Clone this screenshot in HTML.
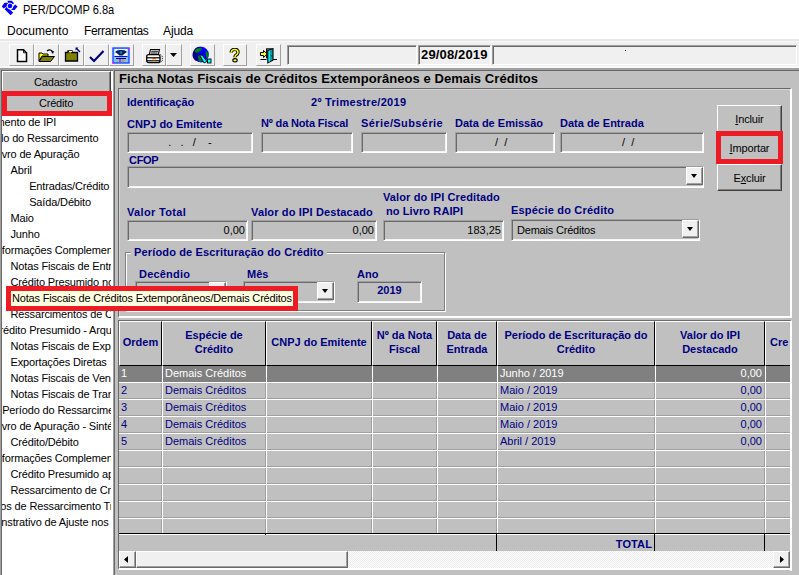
<!DOCTYPE html>
<html><head><meta charset="utf-8"><title>PER/DCOMP</title>
<style>
*{box-sizing:border-box;margin:0;padding:0}
html,body{width:799px;height:575px;overflow:hidden}
body{position:relative;background:#a0a0a0;font-family:"Liberation Sans",sans-serif;font-size:11px;color:#000}
.a{position:absolute}
.t{position:absolute;white-space:nowrap;line-height:12px;font-size:11px}
.b{font-weight:bold}
.nv{color:#000080}
.fld{position:absolute;background:#c0c0c0;border-top:1px solid #a0a0a0;border-left:1px solid #a0a0a0;border-bottom:1px solid #fff;border-right:1px solid #fff;box-shadow:inset 1px 1px 0 #696969,inset -1px -1px 0 #f4f4f4}
.btn{position:absolute;background:#c0c0c0;border-top:1px solid #fff;border-left:1px solid #fff;border-bottom:1px solid #404040;border-right:1px solid #404040;box-shadow:inset -1px -1px 0 #808080}
.tb{position:absolute;top:44px;height:22px;background:#f0f0f0;border-top:1px solid #fff;border-left:1px solid #fff;border-bottom:1px solid #a0a0a0;border-right:1px solid #a0a0a0}
.tb svg{position:absolute}
.dd{position:absolute;top:0;right:0;width:17px;height:18px;background:#f0f0f0;border-top:1px solid #fff;border-left:1px solid #fff;border-bottom:1px solid #696969;border-right:1px solid #696969;box-shadow:inset -1px -1px 0 #a0a0a0}
.dd:after{content:"";position:absolute;left:4px;top:6px;border-left:3.5px solid transparent;border-right:3.5px solid transparent;border-top:4px solid #000}
.red{position:absolute;border:5px solid #ed1c24}
.li{position:absolute;white-space:nowrap;line-height:12px;height:12px;font-size:11px;letter-spacing:-0.15px}
.hc{position:absolute;top:321px;height:45px;background:#c0c0c0;border-top:1px solid #fff;border-left:1px solid #fff;border-right:1px solid #000;border-bottom:1px solid #000;color:#000080;font-weight:bold;text-align:center;line-height:14px;white-space:nowrap;overflow:hidden}
.rc{position:absolute;height:16px;background:#c0c0c0;border-right:1px solid #a0a0a0;border-bottom:1px solid #a0a0a0}
.sel{background:#808080;border-color:#808080}
.rt{position:absolute;white-space:nowrap;line-height:12px;font-size:11px;color:#000080}
.selt{color:#fff}
</style></head>
<body>
<div class="a" style="left:0;top:0;width:799px;height:39px;background:#fff"></div>
<svg class="a" style="left:0;top:0" width="20" height="18" viewBox="0 0 20 18"><g fill="#0000ff">
<path d="M7.3 0.8 H11.8 L14 3.2 L12.6 4.8 L10.4 3.6 H8.8 Z"/>
<path d="M4.6 2.8 H9 L7.6 4.4 L7 6.2 L3.6 8.6 L1.8 6.6 Z"/>
<path d="M15.2 4.4 L17.6 6.6 L14.6 9.9 H11 L12.6 8.2 L13.2 6.6 Z"/>
<path d="M7 6.6 L8.6 8.6 L13.2 12.6 L10.6 15.2 L4.6 9.3 Z"/></g>
<circle cx="10" cy="6" r="2.9" fill="none" stroke="#fff" stroke-width="0.9"/>
<circle cx="10" cy="6" r="2.3" fill="#0000ff"/>
</svg>
<div class="t" style="left:23px;top:3px;font-size:12px;line-height:14px;transform:scaleX(0.92);transform-origin:0 0">PER/DCOMP 6.8a</div>
<div class="t" style="left:7px;top:24px;font-size:12px;line-height:14px">Documento</div>
<div class="t" style="left:84px;top:24px;font-size:12px;line-height:14px;letter-spacing:-0.32px">Ferramentas</div>
<div class="t" style="left:163px;top:24px;font-size:12px;line-height:14px;letter-spacing:-0.1px">Ajuda</div>
<div class="a" style="left:0;top:39px;width:799px;height:29px;background:#f0f0f0"></div>
<div class="a" style="left:0;top:39px;width:799px;height:2px;background:#e8e8e8"></div>
<div class="a" style="left:0;top:41px;width:799px;height:1px;background:#f8f8f8"></div>
<div class="a" style="left:0;top:66px;width:799px;height:2px;background:#fafafa"></div>
<div class="tb" style="left:9px;width:25px"><svg style="left:5.5px;top:4px" width="12" height="14" viewBox="0 0 12 14"><path d="M1.5 0.8 H7.5 L10.5 3.8 V12.6 H1.5 Z" fill="#fff" stroke="#000" stroke-width="1.5" stroke-linejoin="miter"/><path d="M7.5 0.8 V3.8 H10.5" fill="none" stroke="#000" stroke-width="0.9"/></svg></div>
<div class="tb" style="left:34px;width:25px"><svg style="left:3px;top:4px" width="18" height="14" viewBox="0 0 18 14"><path d="M1 4 H4 L5 5 H10 V7 H4 L1 12 Z" fill="#ffff00" stroke="#000" stroke-width="1"/><path d="M1 12.5 L4.5 7.5 H16.5 L12.5 12.5 Z" fill="#808000" stroke="#000" stroke-width="1"/><path d="M9 2 Q12 -0.5 14.5 2.5" fill="none" stroke="#000" stroke-width="1.2"/><path d="M13 2.5 L16 2 L15 5 Z" fill="#000"/></svg></div>
<div class="tb" style="left:59px;width:25px"><svg style="left:4px;top:2px" width="17" height="15" viewBox="0 0 17 15"><path d="M1.5 5.5 H4 V4 H8 V5.5 H13.5 V14 H1.5 Z" fill="#808000" stroke="#000" stroke-width="1.3"/><path d="M5 4.5 H8" stroke="#fff" stroke-width="1"/><path d="M16 5 L12.5 1.5" stroke="#000080" stroke-width="1.4"/><path d="M11.5 0.5 H14.5 L11.5 3.5 Z" fill="#000080"/></svg></div>
<div class="tb" style="left:84px;width:25px"><svg style="left:4px;top:5px" width="16" height="13" viewBox="0 0 16 13"><path d="M1 7 L5 11 L14.5 1" fill="none" stroke="#000080" stroke-width="2.2"/></svg></div>
<div class="tb" style="left:109px;width:25px"><svg style="left:2px;top:2px" width="18" height="17" viewBox="0 0 18 17"><rect x="1" y="1" width="16" height="15" fill="#80c0ff"/><rect x="2.5" y="2" width="13" height="7" fill="#f0f0ff"/><path d="M3 5 Q5 2.5 9 3 Q13 2.5 15 5 Q12 6.5 10.5 8.5 H7.5 Q6 6.5 3 5 Z" fill="#002060"/><circle cx="9" cy="5.5" r="1.3" fill="#2080a0"/><rect x="2.5" y="9" width="13" height="1" fill="#0000ff"/><rect x="4" y="11" width="10" height="1" fill="#000080"/><rect x="4.5" y="12" width="9" height="3" fill="#b0b090"/><rect x="7" y="12" width="2" height="3" fill="#6060ff"/><rect x="10.5" y="12" width="1" height="3" fill="#8090a0"/><rect x="1" y="1" width="16" height="15" fill="none" stroke="#1040ff" stroke-width="1.3"/><rect x="0.5" y="15" width="1.5" height="1.5" fill="#ff00ff"/><rect x="16" y="1" width="1.5" height="1.5" fill="#ff00ff"/></svg></div>
<div class="tb" style="left:142px;width:24px"><svg style="left:3px;top:4px" width="18" height="15" viewBox="0 0 18 15"><path d="M4.5 0.5 H13.5 L12.3 5.5 H3.3 Z" fill="#fff" stroke="#000" stroke-width="1.1"/><path d="M5.3 2.2 H12 M4.8 4 H11.6" stroke="#000" stroke-width="1"/><rect x="0.7" y="5.7" width="13.3" height="8" rx="2" fill="#fff" stroke="#000" stroke-width="1.3"/><rect x="0.7" y="8.2" width="13.3" height="1.2" fill="#000"/><rect x="0.7" y="11.2" width="13.3" height="1.2" fill="#000"/><rect x="6.5" y="9.4" width="3.5" height="1" fill="#ff0000"/><rect x="6.5" y="10.4" width="3.5" height="0.8" fill="#ffff00"/><path d="M14.5 5.5 L16.3 7.5 V11.5 L14.5 13.5" stroke="#000" stroke-width="1" stroke-dasharray="1 1" fill="none"/></svg></div>
<div class="tb" style="left:166px;width:16px"><svg style="left:3px;top:8px" width="7" height="4" viewBox="0 0 7 4"><path d="M0 0 H7 L3.5 4 Z" fill="#000"/></svg></div>
<div class="tb" style="left:190px;width:25px"><svg style="left:1px;top:1px" width="21" height="19" viewBox="0 0 21 19"><circle cx="9" cy="8.6" r="7.8" fill="#0000ff"/><path d="M9 0.8 A7.8 7.8 0 0 0 4 15 L6 14 L5 9 L7 6 L6 2 Z" fill="#000080"/><path d="M3 4 L6 2 L10 2 L9 4 L7 6 L5 7 L3 6 Z" fill="#008000"/><path d="M4 3.5 L6 2.5 L7 4 L5 5 Z" fill="#008080"/><path d="M6 10 L8 9 L10 12 L9.5 16 L7 15.5 Z" fill="#008000"/><path d="M14 5 L16.5 7 L16.5 11 L14.5 12 L13.5 8 Z" fill="#008000"/><path d="M8.5 6 L10 7 H12 L11 8 Z" fill="#000060"/><path d="M7.5 8.5 L10.5 9.5 L15 15.5 L12 17 Z" fill="#00ffff" stroke="#000" stroke-width="0.9" stroke-linejoin="round"/><rect x="15.5" y="13" width="3.5" height="4" fill="#00ffff" stroke="#000" stroke-width="0.9"/></svg></div>
<div class="tb" style="left:223px;width:24px"><svg style="left:5px;top:2.5px" width="12" height="15" viewBox="0 0 12 15"><path d="M2.3 4.6 Q2.3 1.4 5.6 1.4 Q9 1.4 9 4.2 Q9 5.9 7.2 6.9 Q6 7.6 6 9.3" fill="none" stroke="#000" stroke-width="3.4"/><path d="M2.3 4.6 Q2.3 1.4 5.6 1.4 Q9 1.4 9 4.2 Q9 5.9 7.2 6.9 Q6 7.6 6 9.3" fill="none" stroke="#ffff00" stroke-width="1.5"/><ellipse cx="6" cy="12.3" rx="2.2" ry="1.7" fill="#ffff00" stroke="#000" stroke-width="1.1"/></svg></div>
<div class="tb" style="left:256px;width:25px"><svg style="left:3px;top:3px" width="18" height="16" viewBox="0 0 18 16"><rect x="6.5" y="0.8" width="5" height="9" fill="#808080" stroke="#000" stroke-width="0.9"/><path d="M0.5 4.5 H3.5 V2.5 L7.2 6 L3.5 9.5 V7.5 H0.5 Z" fill="#ffff00" stroke="#000" stroke-width="1"/><path d="M0.5 11.5 H6.5 M13 11.5 H17" stroke="#000" stroke-width="1.1"/><path d="M7.8 2.5 L13 0.6 V12.2 L7.8 14.8 Z" fill="#00a0a8" stroke="#000" stroke-width="1.1"/><path d="M8.6 3 L9.8 2.5 V13.6 L8.6 14.2 Z" fill="#00ffff"/><rect x="10.6" y="7.4" width="0.9" height="1" fill="#000"/></svg></div>
<div class="a" style="left:287px;top:45px;width:130px;height:20px;background:#f0f0f0;border-top:1px solid #a0a0a0;border-left:1px solid #a0a0a0;border-bottom:1px solid #fff;border-right:1px solid #fff;box-shadow:inset 1px 1px 0 #696969"></div>
<div class="a" style="left:418px;top:45px;width:73px;height:20px;background:#f0f0f0;border-top:1px solid #a0a0a0;border-left:1px solid #a0a0a0;border-bottom:1px solid #fff;border-right:1px solid #fff;box-shadow:inset 1px 1px 0 #696969"></div>
<div class="t b" style="left:421px;top:47px;font-size:13px;line-height:15px;letter-spacing:0.15px">29/08/2019</div>
<div class="a" style="left:492px;top:45px;width:305px;height:20px;background:#f0f0f0;border-top:1px solid #a0a0a0;border-left:1px solid #a0a0a0;border-bottom:1px solid #fff;border-right:1px solid #fff;box-shadow:inset 1px 1px 0 #696969"></div>
<div class="a" style="left:625px;top:50px;width:1px;height:1px;background:#000"></div>
<div class="a" style="left:1px;top:70px;width:112px;height:505px;background:#fff;border-top:1px solid #696969;border-left:1px solid #696969"></div>
<div class="btn" style="left:2px;top:71px;width:109px;height:22px"></div>
<div class="t" style="left:34px;top:76px;letter-spacing:-0.17px">Cadastro</div>
<div class="btn" style="left:7px;top:96px;width:100px;height:15px;border:0;box-shadow:none"></div>
<div class="t" style="left:39px;top:97px;letter-spacing:-0.2px">Crédito</div>
<div class="red" style="left:2px;top:91px;width:110px;height:25px"></div>
<div class="a" style="left:2px;top:116px;width:109px;height:459px;overflow:hidden">
<div class="li" style="left:-6.4px;top:0px">mento de IPI</div>
<div class="li" style="left:-7.0px;top:16px">ulo do Ressarcimento</div>
<div class="li" style="left:-8.6px;top:32px">Livro de Apuração</div>
<div class="li" style="left:8.5px;top:48px">Abril</div>
<div class="li" style="left:27.2px;top:64px">Entradas/Crédito</div>
<div class="li" style="left:27.2px;top:80px">Saída/Débito</div>
<div class="li" style="left:8.5px;top:96px">Maio</div>
<div class="li" style="left:8.5px;top:112px">Junho</div>
<div class="li" style="left:-9.0px;top:128px">Informações Complementares</div>
<div class="li" style="left:8.5px;top:144px">Notas Fiscais de Entrada</div>
<div class="li" style="left:8.5px;top:160px">Crédito Presumido no</div>
<div class="li" style="left:8.5px;top:176px">Notas Fiscais de Créditos Extemporâneos/Demais Créditos</div>
<div class="li" style="left:8.5px;top:192px">Ressarcimentos de Créditos</div>
<div class="li" style="left:-10.2px;top:208px">Crédito Presumido - Arquivo</div>
<div class="li" style="left:8.5px;top:224px">Notas Fiscais de Exportação</div>
<div class="li" style="left:8.5px;top:240px">Exportações Diretas</div>
<div class="li" style="left:8.5px;top:256px">Notas Fiscais de Venda</div>
<div class="li" style="left:8.5px;top:272px">Notas Fiscais de Transferência</div>
<div class="li" style="left:0.2px;top:288px">Período do Ressarcimento</div>
<div class="li" style="left:-8.6px;top:304px">Livro de Apuração - Sintético</div>
<div class="li" style="left:8.5px;top:320px">Crédito/Débito</div>
<div class="li" style="left:-9.0px;top:336px">Informações Complementares</div>
<div class="li" style="left:8.5px;top:352px">Crédito Presumido apurado</div>
<div class="li" style="left:8.5px;top:368px">Ressarcimento de Créditos</div>
<div class="li" style="left:-7.6px;top:384px">dos de Ressarcimento Trimestrais</div>
<div class="li" style="left:-6.6px;top:400px">onstrativo de Ajuste nos</div>
</div>
<div class="a" style="left:114px;top:70px;width:685px;height:505px;background:#c0c0c0;border-top:1px solid #696969;border-left:1px solid #696969"></div>
<div class="t b" style="left:119px;top:71px;font-size:13px;line-height:15px;letter-spacing:0.07px">Ficha Notas Fiscais de Créditos Extemporâneos e Demais Créditos</div>
<div class="a" style="left:118px;top:88px;width:674px;height:230px;background:#c0c0c0;border-top:1px solid #696969;border-left:1px solid #696969;border-bottom:2px solid #fff;border-right:2px solid #fff;box-shadow:inset 1px 1px 0 #d4d4d4"></div>
<div class="t b nv" style="left:127px;top:96px;">Identificação</div>
<div class="t b nv" style="left:311px;top:96px;letter-spacing:0.3px">2º Trimestre/2019</div>
<div class="t b nv" style="left:127px;top:118px;">CNPJ do Emitente</div>
<div class="t b nv" style="left:261px;top:117px;letter-spacing:-0.15px">Nº da Nota Fiscal</div>
<div class="t b nv" style="left:361px;top:117px;letter-spacing:0.4px">Série/Subsérie</div>
<div class="t b nv" style="left:455px;top:117px;">Data de Emissão</div>
<div class="t b nv" style="left:560px;top:117px;">Data de Entrada</div>
<div class="fld" style="left:127px;top:132px;width:126px;height:21px"><div class="t" style="left:0;right:0;text-align:center;top:3px;color:#000">.&nbsp;&nbsp;&nbsp;.&nbsp;&nbsp;&nbsp;/&nbsp;&nbsp;&nbsp;&nbsp;-</div></div>
<div class="fld" style="left:261px;top:132px;width:92px;height:21px"></div>
<div class="fld" style="left:361px;top:132px;width:86px;height:21px"></div>
<div class="fld" style="left:455px;top:132px;width:100px;height:21px"><div class="t" style="left:39px;top:3px;color:#000">/&nbsp;&nbsp;/</div></div>
<div class="fld" style="left:560px;top:132px;width:144px;height:21px"><div class="t" style="left:61px;top:3px;color:#000">/&nbsp;&nbsp;/</div></div>
<div class="t b nv" style="left:129px;top:154px;letter-spacing:-0.3px">CFOP</div>
<div class="fld" style="left:127px;top:166px;width:577px;height:22px"><div class="dd"></div></div>
<div class="t b nv" style="left:383px;top:191px;letter-spacing:0.12px">Valor do IPI Creditado</div>
<div class="t b nv" style="left:386px;top:205px;letter-spacing:0.1px">no Livro RAIPI</div>
<div class="t b nv" style="left:127px;top:206px;letter-spacing:0.33px">Valor Total</div>
<div class="t b nv" style="left:251px;top:206px;letter-spacing:0.15px">Valor do IPI Destacado</div>
<div class="t b nv" style="left:511px;top:204px;letter-spacing:0.2px">Espécie do Crédito</div>
<div class="fld" style="left:127px;top:220px;width:121px;height:21px"><div class="t" style="right:2px;top:3px;color:#000">0,00</div></div>
<div class="fld" style="left:251px;top:220px;width:126px;height:21px"><div class="t" style="right:2px;top:3px;color:#000">0,00</div></div>
<div class="fld" style="left:383px;top:220px;width:121px;height:21px"><div class="t" style="right:2px;top:3px;color:#000">183,25</div></div>
<div class="fld" style="left:511px;top:219px;width:189px;height:22px"><div class="t" style="left:5px;top:4px;letter-spacing:-0.2px">Demais Créditos</div><div class="dd"></div></div>
<div class="btn" style="left:717px;top:105px;width:65px;height:28px"><div class="t" style="left:0;right:0;text-align:center;top:7px;letter-spacing:-0.15px"><u>I</u>ncluir</div></div>
<div class="btn" style="left:717px;top:134px;width:65px;height:27px"><div class="t" style="left:0;right:0;text-align:center;top:7px;letter-spacing:-0.15px"><u>I</u>mportar</div></div>
<div class="btn" style="left:717px;top:164px;width:65px;height:27px"><div class="t" style="left:0;right:0;text-align:center;top:7px;letter-spacing:-0.15px">E<u>x</u>cluir</div></div>
<div class="red" style="left:716px;top:131px;width:67px;height:33px;border-width:5px"></div>
<div class="a" style="left:125px;top:252px;width:320px;height:59px;border-top:1px solid #808080;border-left:1px solid #808080;border-right:1px solid #fff;border-bottom:1px solid #fff;box-shadow:inset 1px 1px 0 #fff,1px 1px 0 #808080 inset"></div>
<div class="a" style="left:125px;top:252px;width:320px;height:59px;border-top:1px solid #808080;border-left:1px solid #808080;border-right:1px solid #808080;border-bottom:1px solid #808080;box-shadow:inset 1px 1px 0 #fff,1px 1px 0 #fff"></div>
<div class="t b nv" style="left:131px;top:246px;background:#c0c0c0;padding:0 3px;letter-spacing:0.15px">Período de Escrituração do Crédito</div>
<div class="t b nv" style="left:139px;top:268px;letter-spacing:0.2px">Decêndio</div>
<div class="t b nv" style="left:247px;top:268px;">Mês</div>
<div class="t b nv" style="left:357px;top:268px;">Ano</div>
<div class="fld" style="left:135px;top:281px;width:92px;height:22px"><div class="dd"></div></div>
<div class="fld" style="left:243px;top:281px;width:92px;height:22px"><div class="dd"></div></div>
<div class="fld" style="left:357px;top:281px;width:65px;height:22px"><div class="t b" style="left:0;right:0;text-align:center;top:2px;color:#000080">2019</div></div>
<div class="a" style="left:6px;top:286px;width:292px;height:25px;border:5px solid #ed1c24;background:#ffffe1"></div>
<div class="t" style="left:12px;top:292px;letter-spacing:-0.18px">Notas Fiscais de Créditos Extemporâneos/Demais Créditos</div>
<div class="a" style="left:118px;top:320px;width:674px;height:250px;background:#c0c0c0;border-top:1px solid #696969;border-left:1px solid #696969;border-bottom:2px solid #fff;border-right:2px solid #fff"></div>
<div class="a" style="left:119px;top:366px;width:671px;height:167px;background:#fff;overflow:hidden">
<div class="rc sel" style="left:0px;top:0px;width:43px"></div>
<div class="rc sel" style="left:44px;top:0px;width:103px"></div>
<div class="rc sel" style="left:148px;top:0px;width:105px"></div>
<div class="rc sel" style="left:254px;top:0px;width:64px"></div>
<div class="rc sel" style="left:319px;top:0px;width:59px"></div>
<div class="rc sel" style="left:379px;top:0px;width:157px"></div>
<div class="rc sel" style="left:537px;top:0px;width:109px"></div>
<div class="rc sel" style="left:647px;top:0px;width:25px"></div>
<div class="rc" style="left:0px;top:17px;width:43px"></div>
<div class="rc" style="left:44px;top:17px;width:103px"></div>
<div class="rc" style="left:148px;top:17px;width:105px"></div>
<div class="rc" style="left:254px;top:17px;width:64px"></div>
<div class="rc" style="left:319px;top:17px;width:59px"></div>
<div class="rc" style="left:379px;top:17px;width:157px"></div>
<div class="rc" style="left:537px;top:17px;width:109px"></div>
<div class="rc" style="left:647px;top:17px;width:25px"></div>
<div class="rc" style="left:0px;top:34px;width:43px"></div>
<div class="rc" style="left:44px;top:34px;width:103px"></div>
<div class="rc" style="left:148px;top:34px;width:105px"></div>
<div class="rc" style="left:254px;top:34px;width:64px"></div>
<div class="rc" style="left:319px;top:34px;width:59px"></div>
<div class="rc" style="left:379px;top:34px;width:157px"></div>
<div class="rc" style="left:537px;top:34px;width:109px"></div>
<div class="rc" style="left:647px;top:34px;width:25px"></div>
<div class="rc" style="left:0px;top:51px;width:43px"></div>
<div class="rc" style="left:44px;top:51px;width:103px"></div>
<div class="rc" style="left:148px;top:51px;width:105px"></div>
<div class="rc" style="left:254px;top:51px;width:64px"></div>
<div class="rc" style="left:319px;top:51px;width:59px"></div>
<div class="rc" style="left:379px;top:51px;width:157px"></div>
<div class="rc" style="left:537px;top:51px;width:109px"></div>
<div class="rc" style="left:647px;top:51px;width:25px"></div>
<div class="rc" style="left:0px;top:68px;width:43px"></div>
<div class="rc" style="left:44px;top:68px;width:103px"></div>
<div class="rc" style="left:148px;top:68px;width:105px"></div>
<div class="rc" style="left:254px;top:68px;width:64px"></div>
<div class="rc" style="left:319px;top:68px;width:59px"></div>
<div class="rc" style="left:379px;top:68px;width:157px"></div>
<div class="rc" style="left:537px;top:68px;width:109px"></div>
<div class="rc" style="left:647px;top:68px;width:25px"></div>
<div class="rc" style="left:0px;top:85px;width:43px"></div>
<div class="rc" style="left:44px;top:85px;width:103px"></div>
<div class="rc" style="left:148px;top:85px;width:105px"></div>
<div class="rc" style="left:254px;top:85px;width:64px"></div>
<div class="rc" style="left:319px;top:85px;width:59px"></div>
<div class="rc" style="left:379px;top:85px;width:157px"></div>
<div class="rc" style="left:537px;top:85px;width:109px"></div>
<div class="rc" style="left:647px;top:85px;width:25px"></div>
<div class="rc" style="left:0px;top:102px;width:43px"></div>
<div class="rc" style="left:44px;top:102px;width:103px"></div>
<div class="rc" style="left:148px;top:102px;width:105px"></div>
<div class="rc" style="left:254px;top:102px;width:64px"></div>
<div class="rc" style="left:319px;top:102px;width:59px"></div>
<div class="rc" style="left:379px;top:102px;width:157px"></div>
<div class="rc" style="left:537px;top:102px;width:109px"></div>
<div class="rc" style="left:647px;top:102px;width:25px"></div>
<div class="rc" style="left:0px;top:119px;width:43px"></div>
<div class="rc" style="left:44px;top:119px;width:103px"></div>
<div class="rc" style="left:148px;top:119px;width:105px"></div>
<div class="rc" style="left:254px;top:119px;width:64px"></div>
<div class="rc" style="left:319px;top:119px;width:59px"></div>
<div class="rc" style="left:379px;top:119px;width:157px"></div>
<div class="rc" style="left:537px;top:119px;width:109px"></div>
<div class="rc" style="left:647px;top:119px;width:25px"></div>
<div class="rc" style="left:0px;top:136px;width:43px"></div>
<div class="rc" style="left:44px;top:136px;width:103px"></div>
<div class="rc" style="left:148px;top:136px;width:105px"></div>
<div class="rc" style="left:254px;top:136px;width:64px"></div>
<div class="rc" style="left:319px;top:136px;width:59px"></div>
<div class="rc" style="left:379px;top:136px;width:157px"></div>
<div class="rc" style="left:537px;top:136px;width:109px"></div>
<div class="rc" style="left:647px;top:136px;width:25px"></div>
<div class="rc" style="left:0px;top:153px;width:43px"></div>
<div class="rc" style="left:44px;top:153px;width:103px"></div>
<div class="rc" style="left:148px;top:153px;width:105px"></div>
<div class="rc" style="left:254px;top:153px;width:64px"></div>
<div class="rc" style="left:319px;top:153px;width:59px"></div>
<div class="rc" style="left:379px;top:153px;width:157px"></div>
<div class="rc" style="left:537px;top:153px;width:109px"></div>
<div class="rc" style="left:647px;top:153px;width:25px"></div>
<div class="rt selt" style="left:2px;top:1px">1</div>
<div class="rt selt" style="left:46px;top:1px">Demais Créditos</div>
<div class="rt selt" style="left:381px;top:1px">Junho / 2019</div>
<div class="rt selt" style="left:583px;width:60px;text-align:right;top:1px">0,00</div>
<div class="rt" style="left:2px;top:18px">2</div>
<div class="rt" style="left:46px;top:18px">Demais Créditos</div>
<div class="rt" style="left:381px;top:18px">Maio / 2019</div>
<div class="rt" style="left:583px;width:60px;text-align:right;top:18px">0,00</div>
<div class="rt" style="left:2px;top:35px">3</div>
<div class="rt" style="left:46px;top:35px">Demais Créditos</div>
<div class="rt" style="left:381px;top:35px">Maio / 2019</div>
<div class="rt" style="left:583px;width:60px;text-align:right;top:35px">0,00</div>
<div class="rt" style="left:2px;top:52px">4</div>
<div class="rt" style="left:46px;top:52px">Demais Créditos</div>
<div class="rt" style="left:381px;top:52px">Maio / 2019</div>
<div class="rt" style="left:583px;width:60px;text-align:right;top:52px">0,00</div>
<div class="rt" style="left:2px;top:69px">5</div>
<div class="rt" style="left:46px;top:69px">Demais Créditos</div>
<div class="rt" style="left:381px;top:69px">Abril / 2019</div>
<div class="rt" style="left:583px;width:60px;text-align:right;top:69px">0,00</div>
</div>
<div class="hc" style="left:119px;width:43px;padding-top:13px;">Ordem</div>
<div class="hc" style="left:162px;width:104px;padding-top:6px;">Espécie de<br>Crédito</div>
<div class="hc" style="left:266px;width:106px;padding-top:13px;">CNPJ do Emitente</div>
<div class="hc" style="left:372px;width:65px;padding-top:6px;">Nº da Nota<br>Fiscal</div>
<div class="hc" style="left:437px;width:60px;padding-top:6px;">Data de<br>Entrada</div>
<div class="hc" style="left:497px;width:158px;padding-top:6px;">Período de Escrituração do<br>Crédito</div>
<div class="hc" style="left:655px;width:110px;padding-top:6px;">Valor do IPI<br>Destacado</div>
<div class="hc" style="left:765px;width:56px;padding-top:13px;text-align:left;padding-left:4px;">Cre</div>
<div class="a" style="left:790px;top:321px;width:9px;height:250px;background:#c0c0c0;border-left:2px solid #fff"></div>
<div class="a" style="left:119px;top:533px;width:671px;height:1px;background:#000"></div>
<div class="a" style="left:119px;top:534px;width:671px;height:1px;background:#fff"></div>
<div class="a" style="left:496px;top:533px;width:1px;height:18px;background:#000"></div>
<div class="a" style="left:265px;top:533px;width:1px;height:2px;background:#000"></div>
<div class="a" style="left:654px;top:533px;width:1px;height:18px;background:#000"></div>
<div class="a" style="left:764px;top:533px;width:1px;height:18px;background:#000"></div>
<div class="t b nv" style="left:580px;width:72px;text-align:right;top:538px;letter-spacing:0.1px">TOTAL</div>
<div class="a" style="left:119px;top:551px;width:671px;height:17px;background-color:#f8f8f8;background-image:repeating-conic-gradient(#fff 0 25%,#ececec 0 50%);background-size:2px 2px"></div>
<div class="a" style="left:119px;top:551px;width:17px;height:17px;background:#f0f0f0;border-top:1px solid #fff;border-left:1px solid #fff;border-bottom:1px solid #696969;border-right:1px solid #696969;box-shadow:inset -1px -1px 0 #a0a0a0"><svg class="a" style="left:4px;top:4px" width="4" height="7" viewBox="0 0 4 7"><path d="M4 0 V7 L0 3.5 Z" fill="#000"/></svg></div>
<div class="a" style="left:136px;top:551px;width:212px;height:17px;background:#f0f0f0;border-top:1px solid #fff;border-left:1px solid #fff;border-bottom:1px solid #696969;border-right:1px solid #696969;box-shadow:inset -1px -1px 0 #a0a0a0"></div>
<div class="a" style="left:773px;top:551px;width:17px;height:17px;background:#f0f0f0;border-top:1px solid #fff;border-left:1px solid #fff;border-bottom:1px solid #696969;border-right:1px solid #696969;box-shadow:inset -1px -1px 0 #a0a0a0"><svg class="a" style="left:6px;top:4px" width="4" height="7" viewBox="0 0 4 7"><path d="M0 0 V7 L4 3.5 Z" fill="#000"/></svg></div>
</body></html>
